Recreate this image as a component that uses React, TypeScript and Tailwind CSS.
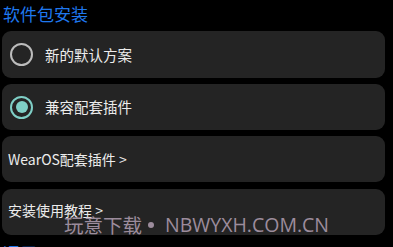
import React from "react";

const font = { fontFamily: '"Noto Sans CJK SC", "Noto Sans", sans-serif' };

function Card({ children }: { children: React.ReactNode }) {
  return (
    <div className="h-[46px] rounded-[9px] bg-[#242424] flex items-center">{children}</div>
  );
}

export default function App() {
  return (
    <div className="relative w-[393px] h-[247px] overflow-hidden bg-black" style={font}>
      <div className="h-[31px] pl-[3px] pt-[1px] text-[17px] leading-[26px] text-[#1f78ee]">软件包安装</div>
      <div className="ml-[2px] w-[383px] flex flex-col gap-[6px]">
        <div className="h-[47px] rounded-[9px] bg-[#242424] flex items-center">
          <div className="ml-[8px] w-[23px] h-[23px] rounded-full border-[2.5px] border-[#bcbcbc]" />
          <span className="ml-[12px] text-[14.5px] text-[#ececec]">新的默认方案</span>
        </div>
        <Card>
          <div className="ml-[8px] w-[23px] h-[23px] rounded-full border-[2.5px] border-[#7fcfc6] flex items-center justify-center">
            <div className="w-[12px] h-[12px] rounded-full bg-[#7fcfc6]" />
          </div>
          <span className="ml-[12px] text-[14.5px] text-[#ececec]">兼容配套插件</span>
        </Card>
        <Card>
          <span className="ml-[6px] text-[14px] text-[#ececec]">WearOS配套插件 &gt;</span>
        </Card>
        <div className="h-[46px] mt-[1px] rounded-[9px] bg-[#242424] flex items-center">
          <span className="ml-[6px] -mt-[4px] text-[14px] text-[#ececec]">安装使用教程 &gt;</span>
        </div>
      </div>
      <div className="pl-[3px] mt-[5px] text-[17px] leading-[26px] text-[#1f78ee]">通用</div>
      <div className="absolute left-[64px] top-[213px] flex items-center leading-[24px] text-[#9c8c9c] whitespace-nowrap">
        <span className="text-[19.5px]">玩意下载</span>
        <span className="ml-[6px] w-[6px] h-[6px] rounded-full bg-[#9c8c9c]" />
        <span className="ml-[11px] text-[19.5px]" style={{ fontFamily: '"Open Sans", "Noto Sans", sans-serif' }}>NBWYXH.COM.CN</span>
      </div>
    </div>
  );
}
